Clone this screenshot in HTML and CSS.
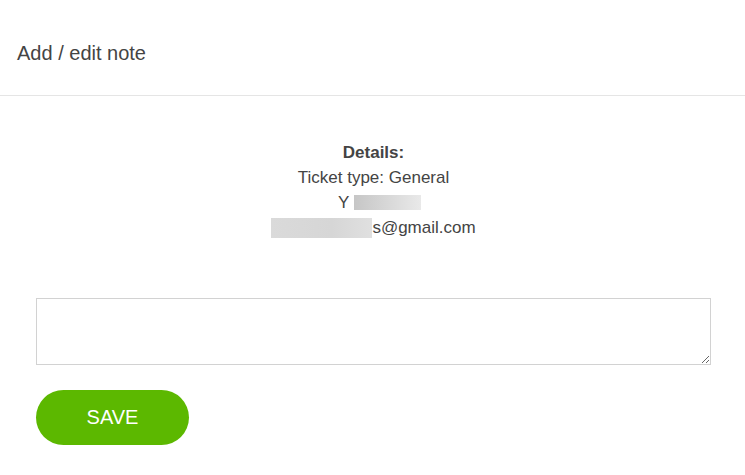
FILE: index.html
```html
<!DOCTYPE html>
<html>
<head>
<meta charset="utf-8">
<link rel="stylesheet" href="styles.css">
</head>
<body>
<div class="modal">
  <div class="modal-header">
    <h4 class="modal-title">Add / edit note</h4>
  </div>
  <div class="modal-body">
    <div class="details">
      <div class="details-title">Details:</div>
      <div>Ticket type: General</div>
      <div class="name-line">Y <span class="redact redact-name"></span></div>
      <div><span class="redact redact-email"></span>s@gmail.com</div>
    </div>
    <textarea class="note"></textarea>
    <button class="save-btn">SAVE</button>
  </div>
</div>
</body>
</html>
```

FILE: styles.css
```css
html, body {
  margin: 0;
  padding: 0;
  background: #fff;
}
body {
  font-family: "Liberation Sans", Arial, sans-serif;
  color: #444;
}
.modal-header {
  box-sizing: border-box;
  height: 96px;
  border-bottom: 1px solid #e5e5e5;
  display: flex;
  align-items: center;
  padding: 11px 0 0 17px;
}
.modal-title {
  margin: 0;
  font-size: 20px;
  font-weight: normal;
  color: #444;
}
.modal-body {
  padding: 44px 34px 0 36px;
}
.details {
  text-align: center;
  font-size: 17px;
  line-height: 25px;
  color: #444;
}
.details-title {
  font-weight: bold;
}
.name-line {
  padding-left: 12px;
}
.redact {
  display: inline-block;
  vertical-align: middle;
}
.redact-name {
  width: 67px;
  height: 15px;
  margin-top: -3px;
  background: linear-gradient(90deg, #c6c6c6, #e9e9e9);
}
.redact-email {
  width: 101px;
  height: 20px;
  margin-top: -1px;
  background: linear-gradient(90deg, #dadada, #d6d6d6 60%, #e0e0e0);
}
.note {
  display: block;
  box-sizing: border-box;
  width: 675px;
  height: 67px;
  margin-top: 58px;
  border: 1px solid #d2d2d2;
  border-radius: 0;
  padding: 6px;
  font-family: "Liberation Sans", Arial, sans-serif;
  font-size: 14px;
  resize: both;
}
.save-btn {
  display: block;
  margin-top: 25px;
  width: 153px;
  height: 55px;
  border: none;
  border-radius: 28px;
  background: #5cb800;
  color: #fff;
  font-family: "Liberation Sans", Arial, sans-serif;
  font-size: 20px;
  padding: 0;
  cursor: pointer;
}
```
